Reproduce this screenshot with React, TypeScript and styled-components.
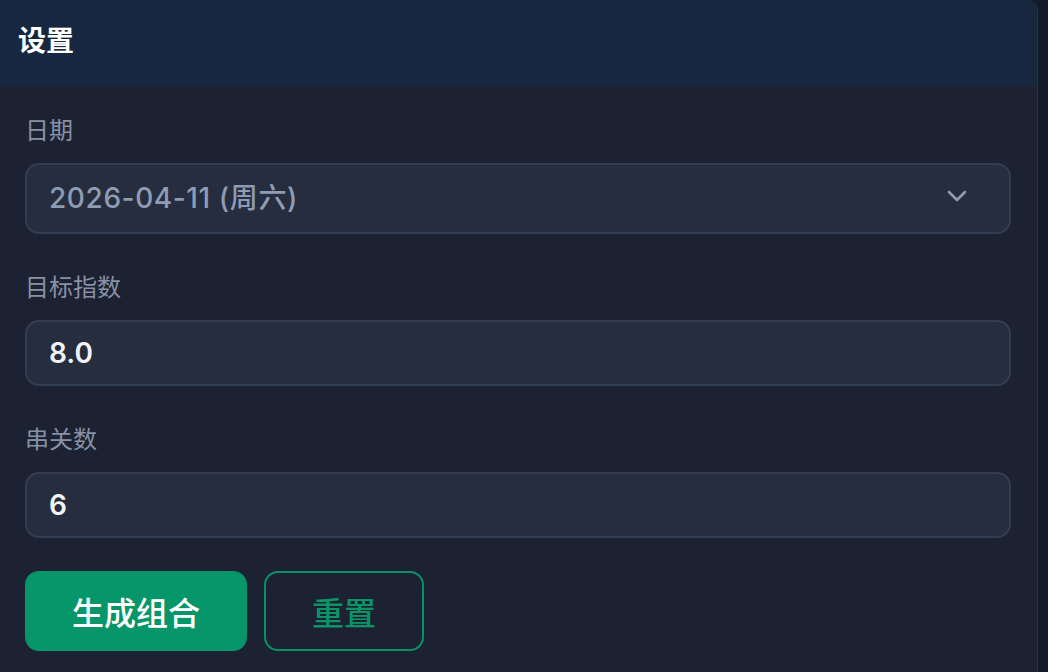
import { useState } from "react";
import styled, { createGlobalStyle } from "styled-components";

const GlobalStyle = createGlobalStyle`
  html, body {
    margin: 0;
    padding: 0;
    background-color: #131a28;
    font-family: Inter, "Noto Sans CJK SC", "Noto Sans", sans-serif;
  }
  * {
    box-sizing: border-box;
  }
`;

const Page = styled.div`
  width: 1048px;
  height: 672px;
  overflow: hidden;
  background-color: #131a28;
`;

const Panel = styled.section`
  width: 1040px;
  margin-left: -2px;
  min-height: 700px;
  background-color: #1c2232;
  border: 1px solid #2b3446;
  border-top: none;
  border-top-right-radius: 10px;
  overflow: hidden;
`;

const Header = styled.header`
  height: 86px;
  display: flex;
  align-items: center;
  padding: 0 19px 8px;
  background-color: #17273f;
  h2 {
    margin: 0;
    font-size: 28px;
    font-weight: 700;
    color: #ffffff;
  }
`;

const Body = styled.div`
  display: flex;
  flex-direction: column;
  gap: 36px;
  padding: 27px 26px 0 26px;
`;

const Field = styled.div`
  display: flex;
  flex-direction: column;
  gap: 14px;
`;

const Label = styled.label`
  font-size: 24px;
  line-height: 36px;
  color: #8891a4;
`;

const SelectBox = styled.div`
  display: flex;
  align-items: center;
  justify-content: space-between;
  height: 71px;
  padding: 0 42px 5px 22px;
  background-color: #252d3f;
  border: 2px solid #333d51;
  border-radius: 14px;
  font-size: 28px;
  font-weight: 500;
  letter-spacing: 0.6px;
  color: #8e9bb3;
  cursor: pointer;
`;

const TextInput = styled.input`
  height: 66px;
  padding: 0 22px;
  background-color: #252d3f;
  border: 2px solid #333d51;
  border-radius: 14px;
  font-family: Inter, "Noto Sans CJK SC", sans-serif;
  font-size: 28px;
  font-weight: 600;
  color: #f1f3f6;
  outline: none;
`;

const Actions = styled.div`
  display: flex;
  gap: 17px;
  margin-top: -3px;
`;

const Button = styled.button<{ $variant: "primary" | "outline" }>`
  height: 80px;
  padding: 0 ${(p) => (p.$variant === "primary" ? "45px" : "46px")};
  border-radius: 14px;
  font-family: "Noto Sans CJK SC", sans-serif;
  font-size: 32px;
  font-weight: 500;
  cursor: pointer;
  color: ${(p) => (p.$variant === "primary" ? "#ffffff" : "#0a9467")};
  background-color: ${(p) => (p.$variant === "primary" ? "#069669" : "transparent")};
  border: 2px solid ${(p) => (p.$variant === "primary" ? "#069669" : "#0b8f64")};
`;

function Chevron() {
  return (
    <svg width="20" height="12" viewBox="0 0 20 12" fill="none">
      <path
        d="M2 2L10 10L18 2"
        stroke="#8e9bb3"
        strokeWidth="2.6"
        strokeLinecap="round"
        strokeLinejoin="round"
      />
    </svg>
  );
}

export default function App() {
  const [target, setTarget] = useState("8.0");
  const [legs, setLegs] = useState("6");

  return (
    <Page>
      <GlobalStyle />
      <Panel>
        <Header>
          <h2>设置</h2>
        </Header>
        <Body>
          <Field>
            <Label>日期</Label>
            <SelectBox>
              <span>2026-04-11 (周六)</span>
              <Chevron />
            </SelectBox>
          </Field>
          <Field>
            <Label>目标指数</Label>
            <TextInput value={target} onChange={(e) => setTarget(e.target.value)} />
          </Field>
          <Field>
            <Label>串关数</Label>
            <TextInput value={legs} onChange={(e) => setLegs(e.target.value)} />
          </Field>
          <Actions>
            <Button $variant="primary">生成组合</Button>
            <Button
              $variant="outline"
              onClick={() => {
                setTarget("8.0");
                setLegs("6");
              }}
            >
              重置
            </Button>
          </Actions>
        </Body>
      </Panel>
    </Page>
  );
}
